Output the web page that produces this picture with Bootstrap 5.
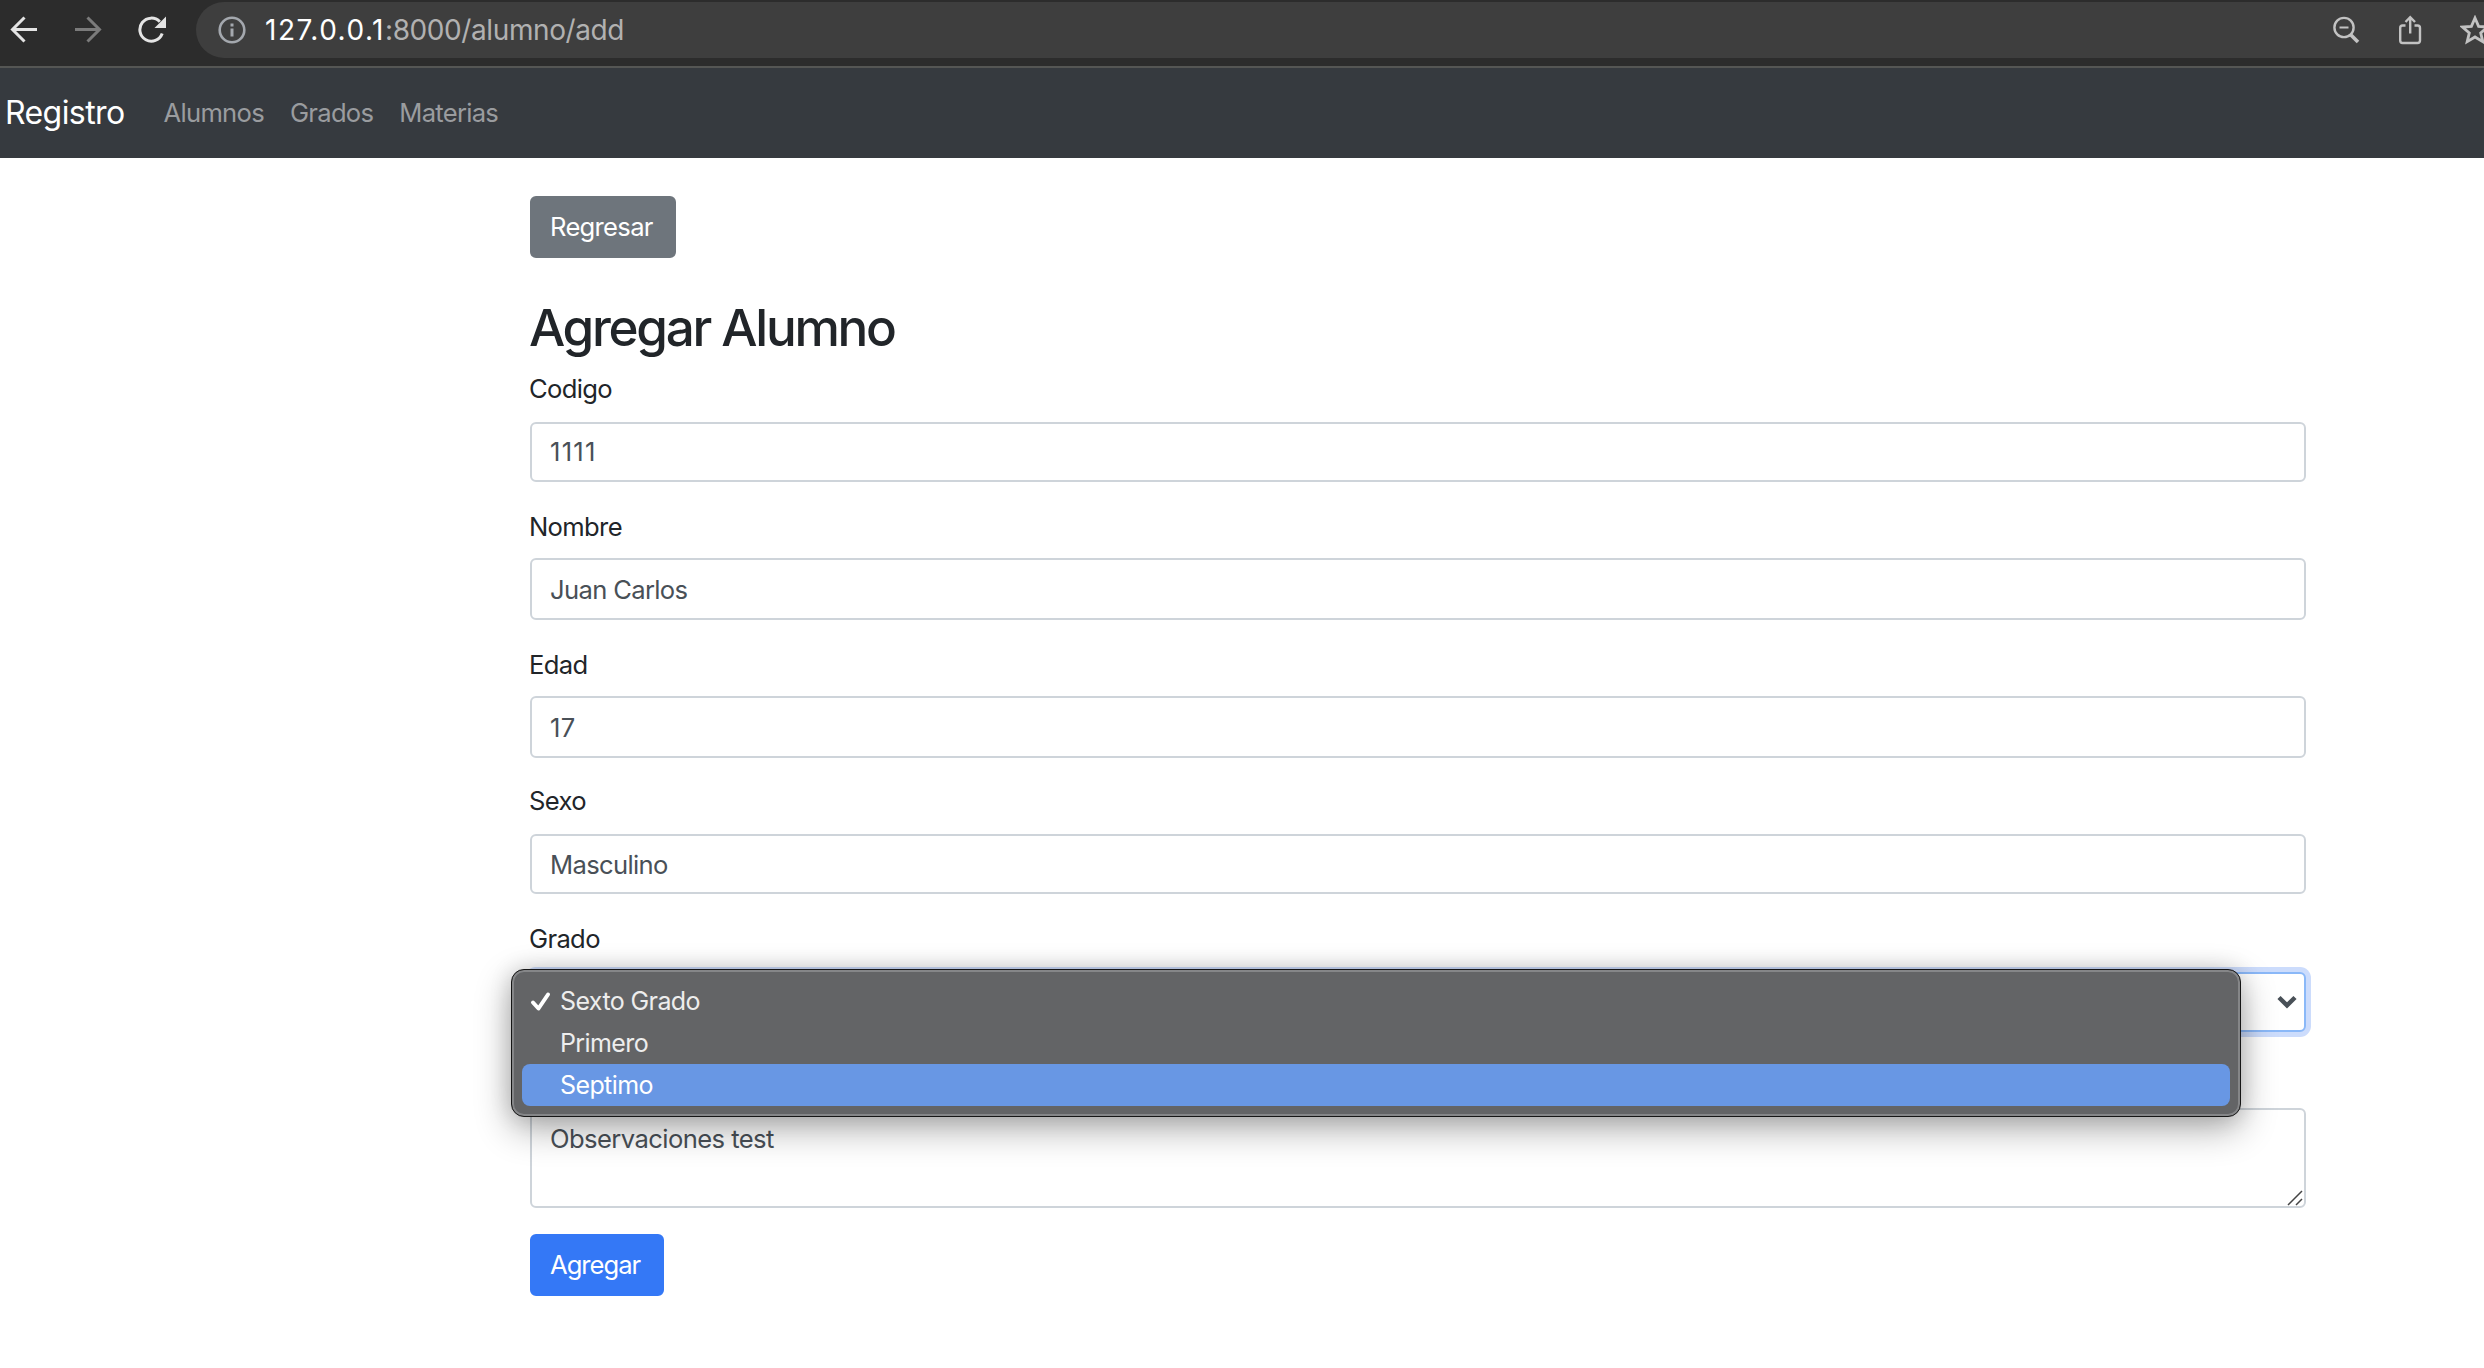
<!DOCTYPE html>
<html lang="es">
<head>
<meta charset="utf-8">
<meta name="viewport" content="width=device-width, initial-scale=1">
<title>Agregar Alumno</title>
<link href="https://cdn.jsdelivr.net/npm/bootstrap@5.3.0/dist/css/bootstrap.min.css" rel="stylesheet">
<style>
  body { font-family: Inter, "Liberation Sans", sans-serif; font-size: 25.6px; line-height: 38px; color: #212529; background: #fff; letter-spacing: -.66px; overflow: hidden; min-height: 1368px; }

  /* browser toolbar */
  .toolbar { height: 68px; background: #2c2c2c; border-bottom: 2px solid #555654; padding: 2px 0 8px 10px; }
  .toolbar svg { display: block; flex: none; }
  .tool-nav { width: 186px; gap: 36px; }
  .address { height: 56px; border-radius: 28px 0 0 28px; background: #3e3e3e; padding-left: 22px; color: #b1b1b1; font-size: 28px; letter-spacing: -.4px; }
  .address-host { color: #fff; letter-spacing: 1.5px; margin-left: 19px; }
  .address-tools { gap: 36px; margin-right: -6px; }

  /* site navbar */
  .site-nav { height: 90px; background: #363a3f; padding: 0 0 0 5px; }
  .site-nav .navbar-brand { font-size: 32px; line-height: 48px; color: #fff; padding: 0; margin: 0 39px 0 0; letter-spacing: -.58px; }
  .site-nav .navbar-nav { gap: 26px; }
  .site-nav .navbar-nav .nav-link { color: #9a9c9f; padding: 0; line-height: 38px; letter-spacing: -.72px; }

  .page { width: 1776px; margin-left: 530px; padding-top: 38px; }
  .btn-flat { --bs-btn-font-size: 25.6px; --bs-btn-padding-x: 18px; --bs-btn-padding-y: 0; --bs-btn-border-radius: 6px; --bs-btn-border-width: 2px; height: 62px; line-height: 58px; display: block; text-align: left; }
  .btn-back { width: 146px; --bs-btn-bg: #6e757c; --bs-btn-border-color: #6e757c; letter-spacing: -.7px; }
  .btn-send { width: 134px; margin-top: 26px; --bs-btn-bg: #3478f6; --bs-btn-border-color: #3478f6; letter-spacing: -1px; }
  .page-title { font-size: 51.2px; line-height: 62px; font-weight: 500; letter-spacing: -2.3px; margin: 38px 0 12px -1px; }

  .field { margin-bottom: 26px; }
  .field label { display: block; line-height: 38px; margin: 0 0 12px -1px; }
  .field .form-control { height: 62px; padding: 0 18px; border: 2px solid #ced4da; border-radius: 6px; font-size: 25.6px; line-height: 38px; color: #495057; letter-spacing: inherit; }
  .field-short .form-control { height: 60px; }
  .field-code label { margin-bottom: 14px; }
  .field-code .form-control { padding-bottom: 2px; letter-spacing: 1.26px; }
  .field-age { margin-bottom: 24px; }
  .field-age .form-control { letter-spacing: .4px; }
  .field-low label { margin-bottom: 14px; }
  .field-grade { margin-bottom: 76px; }
  .field .form-control.select-open { border-color: #8ab8f8; box-shadow: 0 0 0 5px #ccdcfc; padding-right: 7px; }
  .field textarea.form-control { height: 100px; min-height: 0; padding: 10px 18px; resize: none; display: block; letter-spacing: -.58px; }
  .grip { position: absolute; right: 3px; bottom: 2px; }

  /* native option list lying over the form */
  .options { position: absolute; z-index: 5; left: -19px; top: -3px; width: 1730px; height: 148px; background: #636466; border: 1px solid #161616; border-radius: 13px; padding: 10px 10px;
    box-shadow: inset 0 0 0 2px #858688, 0 12px 36px rgba(0,0,0,.32), 0 0 22px rgba(0,0,0,.14); }
  .options li { height: 42px; line-height: 42px; font-size: 25px; color: #ededed; padding-left: 8px; border-radius: 8px; letter-spacing: -.6px; }
  .options li.hovered { background: #6897e4; color: #fff; }
  .tick { width: 30px; }
</style>
<script src="https://cdn.jsdelivr.net/npm/bootstrap@5.3.0/dist/js/bootstrap.bundle.min.js"></script>
</head>
<body>
<header class="toolbar d-flex">
  <div class="tool-nav d-flex align-items-center">
    <svg width="28" height="28" viewBox="0 0 28 28" fill="none" stroke="#e4e4e4" stroke-width="3"><path d="M27 13.500H3M14.500 1.500L2.500 13.500L14.500 25.500"/></svg>
    <svg width="28" height="28" viewBox="0 0 28 28" fill="none" stroke="#7b7b7b" stroke-width="3"><path d="M1 13.500H25M13.500 1.500L25.500 13.500L13.500 25.500"/></svg>
    <svg width="28" height="28" viewBox="0 0 28 28"><path d="M24.200 17.500A11.500 11.500 0 1 1 21.800 5.800" fill="none" stroke="#e4e4e4" stroke-width="3"/><path d="M28 .5V12H16.500Z" fill="#e4e4e4"/></svg>
  </div>
  <div class="address flex-grow-1 d-flex align-items-center">
    <svg width="28" height="28" viewBox="0 0 28 28"><circle cx="14" cy="14" r="12.300" fill="none" stroke="#a4a8ae" stroke-width="2.600"/><path d="M12.500 12.500h3v8h-3zM12.500 7.500h3v3h-3z" fill="#a4a8ae"/></svg>
    <span class="address-host">127.0.0.1</span><span>:8000/alumno/add</span>
    <div class="address-tools d-flex align-items-center ms-auto">
      <svg width="28" height="28" viewBox="0 0 28 28" fill="none" stroke="#c2c2c2"><circle cx="12" cy="11.500" r="9.600" stroke-width="2.400"/><path d="M7.500 11.500h9" stroke-width="2"/><path d="M18.700 18.700L26 26" stroke-width="3.600"/></svg>
      <svg width="28" height="30" viewBox="0 0 28 30" fill="none" stroke="#c2c2c2" stroke-width="2.400"><path d="M9.500 10.500H6.500Q4.200 10.500 4.200 13V25.500Q4.200 28 6.500 28H21.500Q24 28 24 25.500V13Q24 10.500 21.500 10.500H18.500M14.200 18.500V3M9.500 7L14.200 2.200L19 7"/></svg>
      <svg width="30" height="30" viewBox="0 0 30 30" fill="none" stroke="#c2c2c2" stroke-width="2.800"><path d="M15 3L18.600 11.300L27.500 12L20.700 17.900L22.800 26.600L15 22L7.200 26.600L9.300 17.900L2.500 12L11.400 11.300Z"/></svg>
    </div>
  </div>
</header>

<nav class="site-nav navbar navbar-expand navbar-dark">
  <a class="navbar-brand" href="#">Registro</a>
  <div class="navbar-nav">
    <a class="nav-link" href="#">Alumnos</a>
    <a class="nav-link" href="#">Grados</a>
    <a class="nav-link" href="#">Materias</a>
  </div>
</nav>

<main class="page">
  <a class="btn btn-secondary btn-flat btn-back" href="#">Regresar</a>
  <h2 class="page-title">Agregar Alumno</h2>
  <form>
    <div class="field field-short field-code">
      <label for="codigo">Codigo</label>
      <input class="form-control" id="codigo" value="1111">
    </div>
    <div class="field">
      <label for="nombre">Nombre</label>
      <input class="form-control" id="nombre" value="Juan Carlos">
    </div>
    <div class="field field-age">
      <label for="edad">Edad</label>
      <input class="form-control" id="edad" value="17">
    </div>
    <div class="field field-short field-low">
      <label for="sexo">Sexo</label>
      <input class="form-control" id="sexo" value="Masculino">
    </div>
    <div class="field field-short field-low field-grade">
      <label>Grado</label>
      <div class="position-relative">
        <div class="form-control select-open d-flex align-items-center justify-content-end">
          <svg width="20" height="14" viewBox="0 0 20 14" fill="none" stroke="#495057" stroke-width="4.500"><path d="M2 2.500L10 10.300L18 2.500"/></svg>
        </div>
        <ul class="options list-unstyled m-0">
          <li class="d-flex align-items-center"><span class="tick d-flex"><svg width="22" height="22" viewBox="0 0 22 22" fill="none" stroke="#fff" stroke-width="4" stroke-linecap="round" stroke-linejoin="round"><path d="M3 12.500L8.500 18.500L18 4.500"/></svg></span>Sexto Grado</li>
          <li class="d-flex align-items-center"><span class="tick"></span>Primero</li>
          <li class="hovered d-flex align-items-center"><span class="tick"></span>Septimo</li>
        </ul>
      </div>
    </div>
    <div class="field position-relative mb-0">
      <textarea class="form-control" aria-label="Observaciones">Observaciones test</textarea>
      <svg class="grip" width="16" height="16" viewBox="0 0 16 16" fill="none" stroke="#444" stroke-width="1.500"><path d="M1 15L15 1M9 15L15 9"/></svg>
    </div>
    <button type="button" class="btn btn-primary btn-flat btn-send">Agregar</button>
  </form>
</main>
</body>
</html>
